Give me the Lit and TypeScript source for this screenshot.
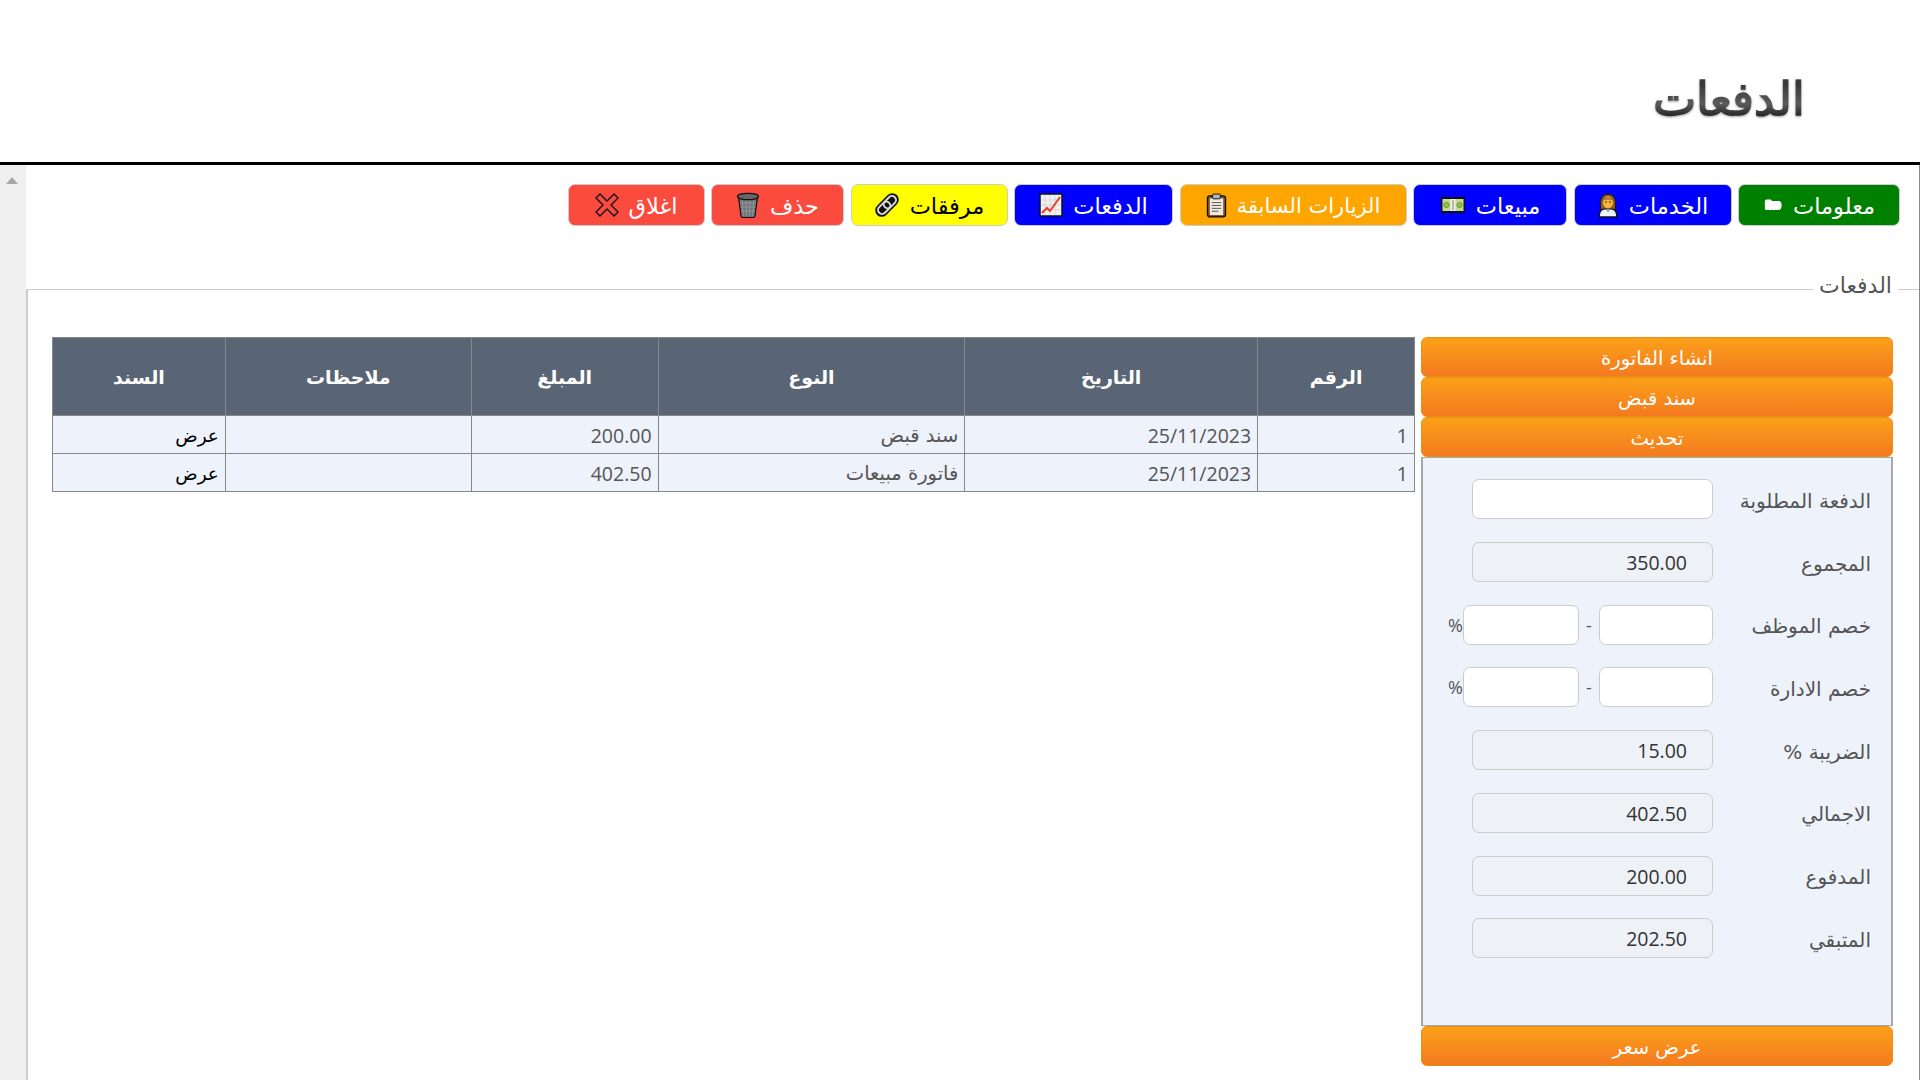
import { LitElement, html, css, svg } from "lit";
import { customElement } from "lit/decorators.js";

const icons: Record<string, unknown> = {
  folder: svg`<svg viewBox="0 0 22 22" width="20" height="20"><path d="M2 7.500 Q2 5 4 5 H8.500 L10 6.500 H17 Q20.500 6.500 20.500 11 Q20.500 16.500 17 16.500 H4 Q2 16.500 2 15Z" fill="#fff"/><path d="M6 16v-1M10 16v-1M14 16v-1" stroke="#bcd0a8" stroke-width="1"/></svg>`,
  doctor: svg`<svg viewBox="0 0 22 26" width="22" height="26"><path d="M2 25c0-6 3-9 9-9s9 3 9 9z" fill="#eef3f6" stroke="#111" stroke-width="1.300"/><path d="M4 18C2 10 4 2 11 2s9 8 7 16l-3-1H7z" fill="#8a5a2b" stroke="#111" stroke-width="1"/><ellipse cx="11" cy="10.500" rx="5" ry="6" fill="#f5b43a"/><path d="M6 8c2-3 8-3 10 0-3-1-7-1-10 0z" fill="#8a5a2b"/><circle cx="9" cy="10" r=".8" fill="#222"/><circle cx="13" cy="10" r=".8" fill="#222"/><path d="M9.500 17.500L11 20l1.500-2.500" fill="none" stroke="#6f99b8" stroke-width="1"/></svg>`,
  money: svg`<svg viewBox="0 0 26 18" width="26" height="18"><rect x="1" y="1" width="24" height="16" fill="#111"/><rect x="2.500" y="3" width="21" height="12" fill="#c5d89a"/><rect x="10.500" y="3" width="5" height="12" fill="#eef0ea"/><circle cx="6.500" cy="9" r="2.600" fill="#8cc63f" stroke="#4a6b2a" stroke-width=".6"/><circle cx="19.500" cy="9" r="2.600" fill="#8cc63f" stroke="#4a6b2a" stroke-width=".6"/><rect x="12.300" y="4" width="1.400" height="10" fill="#9aa08c"/></svg>`,
  clip: svg`<svg viewBox="0 0 22 26" width="21" height="25"><rect x="1.500" y="3" width="19" height="22" rx="2.500" fill="#7a5230" stroke="#111" stroke-width="1.300"/><rect x="4" y="5.500" width="14" height="17.500" fill="#efe9de"/><rect x="7" y="1" width="8" height="5" rx="1" fill="#b9b9b9" stroke="#111" stroke-width="1"/><path d="M6 10h10M6 13h10M6 16h10M6 19h7" stroke="#555" stroke-width="1"/></svg>`,
  chart: svg`<svg viewBox="0 0 24 24" width="24" height="24"><rect x="1" y="1" width="22" height="22" fill="#f0f0f0" stroke="#111" stroke-width="1.500"/><path d="M6 2v20M11 2v20M16 2v20M2 7h20M2 12h20M2 17h20" stroke="#d2d2d2" stroke-width=".8"/><path d="M3 20l5-5 3 3 10-14" fill="none" stroke="#e8402a" stroke-width="2"/></svg>`,
  link: svg`<svg viewBox="0 0 26 26" width="26" height="26"><g transform="rotate(-45 13 13)"><rect x="-1" y="6.500" width="28" height="13" rx="6.500" fill="#111"/><rect x="2" y="9" width="14" height="8" rx="4" fill="none" stroke="#d8d8d8" stroke-width="2"/><rect x="10" y="9" width="14" height="8" rx="4" fill="none" stroke="#d8d8d8" stroke-width="2"/></g></svg>`,
  trash: svg`<svg viewBox="0 0 24 26" width="24" height="26"><path d="M2.500 5l2.500 19q.3 1.500 2 1.500h10q1.700 0 2-1.500l2.500-19z" fill="#70757a" stroke="#111" stroke-width="1.200"/><path d="M6 8l1.500 16M10 8l.5 16M14 8l-.5 16M18 8l-1.500 16M4 11h16M4.500 15h15M5 19h14" stroke="#9aa0a4" stroke-width=".7"/><ellipse cx="12" cy="4.500" rx="10.500" ry="3.200" fill="#666" stroke="#111" stroke-width="1.300"/></svg>`,
  cross: svg`<svg viewBox="0 0 24 24" width="24" height="24"><path d="M5 1l7 7 7-7 4 4-7 7 7 7-4 4-7-7-7 7-4-4 7-7-7-7z" fill="#fb4b3e" stroke="#111" stroke-width="1.400" stroke-linejoin="round"/></svg>`,
};

const toolbar = [
  { t: "معلومات", i: "folder", c: "green", w: 162 },
  { t: "الخدمات", i: "doctor", c: "blue", w: 158 },
  { t: "مبيعات", i: "money", c: "blue", w: 154 },
  { t: "الزيارات السابقة", i: "clip", c: "orange narrow", w: 227 },
  { t: "الدفعات", i: "chart", c: "blue", w: 159 },
  { t: "مرفقات", i: "link", c: "yellow", w: 157 },
  { t: "حذف", i: "trash", c: "red", w: 133 },
  { t: "اغلاق", i: "cross", c: "red", w: 137 },
];

const fields: { l: string; v?: string; ro?: boolean; pair?: boolean }[] = [
  { l: "الدفعة المطلوبة" },
  { l: "المجموع", v: "350.00", ro: true },
  { l: "خصم الموظف", pair: true },
  { l: "خصم الادارة", pair: true },
  { l: "الضريبة %", v: "15.00", ro: true },
  { l: "الاجمالي", v: "402.50", ro: true },
  { l: "المدفوع", v: "200.00", ro: true },
  { l: "المتبقي", v: "202.50", ro: true },
];

const rows = [
  { n: "1", d: "25/11/2023", k: "سند قبض", a: "200.00" },
  { n: "1", d: "25/11/2023", k: "فاتورة مبيعات", a: "402.50" },
];

@customElement("app-root")
export class AppRoot extends LitElement {
  static styles = css`
    :host { display: block; width: 1920px; height: 1080px; overflow: hidden; background: #fff; font-family: "Open Sans", "DejaVu Sans", sans-serif; color: #444; }
    .head { height: 162px; box-sizing: border-box; direction: rtl; padding: 62px 115px 0 0; }
    .title { display: inline-block; margin: 0; font-family: "Liberation Serif", serif; font-size: 46px; line-height: 76px; font-weight: 700; background: linear-gradient(#3a3a3a 30%, #5a5a5a 55%, #2a2a2a 70%); -webkit-background-clip: text; background-clip: text; color: transparent; filter: drop-shadow(0 1px 1px #999); }
    .body { display: flex; height: 915px; border-top: 3px solid #000; }
    .rail { width: 26px; flex: none; background: #f0f0f0; display: flex; justify-content: center; padding: 12px 3px 0 0; box-sizing: border-box; }
    .tri { width: 0; height: 0; border-left: 6.500px solid transparent; border-right: 6.500px solid transparent; border-bottom: 7px solid #a8a8a8; }
    .main { flex: 1; direction: rtl; border-right: 1px solid #888; min-width: 0; }
    .tools { display: flex; gap: 6.500px; padding: 19px 19px 0 0; height: 42px; }
    .tbtn { display: flex; align-items: center; justify-content: center; gap: 10px; height: 42px; box-sizing: border-box; border: 1px solid #ccc; border-radius: 7px; font: 22.500px "DejaVu Sans", sans-serif; color: #fff; flex: none; }
    .tbtn span { padding-top: 2px; }
    .tbtn svg { display: block; flex: none; }
    .green { background: #008000; }
    .blue { background: #0000ff; }
    .orange { background: #ffa500; }
    .yellow { background: #ffff00; color: #000; }
    .red { background: #fb4b3e; }
    .tbtn.narrow { font-size: 21px; }
    .fs { margin: 63px 0 0 0; height: 800px; border-top: 1px solid #ccc; border-left: 2px solid #ccc; position: relative; padding: 47px 26px 0 24px; display: flex; gap: 6px; }
    .legend { position: absolute; top: -23px; right: 21px; padding: 0 6px; background: #fff; font: 22px/38px "DejaVu Sans", sans-serif; color: #555; }
    .side { width: 472px; flex: none; display: flex; flex-direction: column; }
    .obtn { height: 40px; box-sizing: border-box; border: 1px solid #e8900f; border-radius: 6px; background: linear-gradient(#fba019, #f47a20); color: #fff; font: 19.500px/42px "DejaVu Sans", sans-serif; text-align: center; }
    .panel { height: 569px; box-sizing: border-box; background: #edf2fb; border: 1px solid #a4a8ae; border-width: 1px 2px; padding: 21.400px 0 0 0; }
    .row { display: flex; align-items: center; height: 40px; margin-bottom: 22.700px; }
    .lab { width: 178px; flex: none; padding: 3px 20px 0 0; box-sizing: border-box; font: 20px "DejaVu Sans", sans-serif; color: #555; }
    .in { box-sizing: border-box; height: 40px; width: 241px; background: #fff; border: 1px solid #ccc; border-radius: 7px; text-align: right; padding: 0 25px; font-size: 19.500px; line-height: 40px; color: #333; }
    .ro { background: #eef1f6; }
    .sm1 { width: 114px; }
    .sm2 { width: 116px; }
    .dash { width: 20px; text-align: center; color: #555; font-size: 18px; }
    .pct { color: #555; font-size: 18px; width: 16px; }
    table { flex: 1; border-collapse: collapse; table-layout: fixed; align-self: flex-start; height: 154px; }
    th { height: 78px; box-sizing: border-box; padding: 0; background: #596575; color: #fff; border: 1px solid #888; font: bold 19px "DejaVu Sans", sans-serif; }
    td { height: 38px; box-sizing: border-box; padding: 2px 6px 0; background: #edf2fb; border: 1px solid #888; text-align: right; color: #555; font: 19.500px "Open Sans", sans-serif; }
    td.show { color: #000; font: 18.500px "DejaVu Sans", sans-serif; }
    td.k { font: 19.500px "DejaVu Sans", sans-serif; }
  `;

  render() {
    return html`
      <div class="head"><h1 class="title">الدفعات</h1></div>
      <div class="body">
        <div class="rail"><div class="tri"></div></div>
        <div class="main">
          <div class="tools">
            ${toolbar.map((b) => html`<div class="tbtn ${b.c}" style="width:${b.w}px"><span>${b.t}</span>${icons[b.i]}</div>`)}
          </div>
          <div class="fs">
            <div class="legend">الدفعات</div>
            <div class="side">
              <div class="obtn">انشاء الفاتورة</div>
              <div class="obtn">سند قبض</div>
              <div class="obtn">تحديث</div>
              <div class="panel">
                ${fields.map((f) => html`<div class="row">
                  <div class="lab">${f.l}</div>
                  ${f.pair
                    ? html`<div class="in sm1"></div><div class="dash">-</div><div class="in sm2"></div><div class="pct">%</div>`
                    : html`<div class="in ${f.ro ? "ro" : ""}">${f.v ?? ""}</div>`}
                </div>`)}
              </div>
              <div class="obtn">عرض سعر</div>
            </div>
            <table>
              <colgroup>
                <col style="width:157px" /><col style="width:293px" /><col style="width:307px" /><col style="width:187px" /><col style="width:246px" /><col style="width:173px" />
              </colgroup>
              <thead><tr><th>الرقم</th><th>التاريخ</th><th>النوع</th><th>المبلغ</th><th>ملاحظات</th><th>السند</th></tr></thead>
              <tbody>
                ${rows.map((r) => html`<tr><td>${r.n}</td><td>${r.d}</td><td class="k">${r.k}</td><td>${r.a}</td><td></td><td class="show">عرض</td></tr>`)}
              </tbody>
            </table>
          </div>
        </div>
      </div>
    `;
  }
}
